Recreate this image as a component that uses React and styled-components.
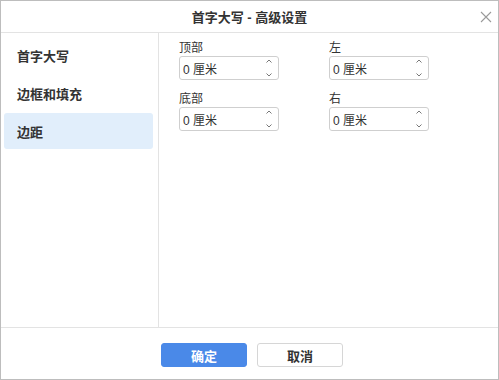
import { createGlobalStyle, styled } from 'styled-components';

const GlobalStyle = createGlobalStyle`
  html, body {
    margin: 0;
    padding: 0;
    background: #fff;
  }
  body {
    font-family: "Liberation Sans", "Noto Sans CJK SC", sans-serif;
    color: #333;
  }
`;

const Dialog = styled.div`
  width: 499px;
  height: 380px;
  box-sizing: border-box;
  border: 1px solid #bdbdbd;
  background: #fff;
  display: flex;
  flex-direction: column;
`;

const Header = styled.div`
  height: 31px;
  flex-shrink: 0;
  border-bottom: 1px solid #e3e3e3;
  display: flex;
  align-items: center;
  justify-content: center;
  position: relative;
`;

const Title = styled.div`
  font-size: 13px;
  font-weight: 700;
  color: #333;
`;

const CloseButton = styled.button`
  position: absolute;
  right: 5px;
  top: 9px;
  width: 14px;
  height: 14px;
  padding: 0;
  border: none;
  background: transparent;
  display: flex;
  align-items: center;
  justify-content: center;
  cursor: pointer;
`;

const Body = styled.div`
  flex: 1;
  display: flex;
  min-height: 0;
`;

const SideMenu = styled.aside`
  width: 149px;
  flex-shrink: 0;
  border-right: 1px solid #e3e3e3;
  padding: 4px 5px 0 3px;
  display: flex;
  flex-direction: column;
  gap: 2px;
`;

const MenuItem = styled.div`
  height: 36px;
  border-radius: 3px;
  padding-left: 13px;
  display: flex;
  align-items: center;
  font-size: 13px;
  font-weight: 700;
  color: #333;
  background: ${({ $active }) => ($active ? '#e1eefb' : 'transparent')};
  cursor: pointer;
`;

const Content = styled.div`
  flex: 1;
  padding: 7px 0 0 20px;
`;

const FieldGrid = styled.div`
  display: grid;
  grid-template-columns: 100px 100px;
  column-gap: 50px;
  row-gap: 11px;
`;

const Field = styled.div`
  display: flex;
  flex-direction: column;
`;

const Label = styled.div`
  font-size: 12px;
  line-height: 16px;
  color: #333;
`;

const SpinBox = styled.div`
  height: 24px;
  box-sizing: border-box;
  border: 1px solid #cfcfcf;
  border-radius: 3px;
  display: flex;
  align-items: center;
  padding: 0 6px 0 3px;
`;

const SpinValue = styled.div`
  flex: 1;
  font-size: 12px;
  color: #333;
`;

const SpinArrows = styled.div`
  display: flex;
  flex-direction: column;
  justify-content: space-between;
  height: 18px;
`;

const Footer = styled.div`
  height: 52px;
  box-sizing: border-box;
  flex-shrink: 0;
  border-top: 1px solid #e3e3e3;
  display: flex;
  justify-content: center;
  align-items: flex-start;
  padding: 15px 0 0 5px;
  gap: 10px;
`;

const Button = styled.button`
  width: 86px;
  height: 24px;
  box-sizing: border-box;
  border-radius: 3px;
  font-family: inherit;
  font-size: 13px;
  font-weight: 700;
  padding: 0;
  cursor: pointer;
  border: 1px solid ${({ $primary }) => ($primary ? '#4a89e8' : '#d6d6d6')};
  background: ${({ $primary }) => ($primary ? '#4a89e8' : '#fff')};
  color: ${({ $primary }) => ($primary ? '#fff' : '#333')};
`;

const menu = ['首字大写', '边框和填充', '边距'];
const fields = ['顶部', '左', '底部', '右'];

function Chevron({ up }) {
  return (
    <svg width="6" height="4" viewBox="0 0 6 4">
      <path
        d={up ? 'M0.5 3.5 L3 1 L5.5 3.5' : 'M0.5 0.5 L3 3 L5.5 0.5'}
        fill="none"
        stroke="#777"
        strokeWidth="1"
      />
    </svg>
  );
}

export default function App() {
  return (
    <>
      <GlobalStyle />
      <Dialog>
        <Header>
          <Title>首字大写 - 高级设置</Title>
          <CloseButton>
            <svg width="12" height="12" viewBox="0 0 12 12">
              <path d="M1 1 L11 11 M11 1 L1 11" stroke="#9a9a9a" strokeWidth="1.1" />
            </svg>
          </CloseButton>
        </Header>
        <Body>
          <SideMenu>
            {menu.map((item, i) => (
              <MenuItem key={item} $active={i === 2}>
                {item}
              </MenuItem>
            ))}
          </SideMenu>
          <Content>
            <FieldGrid>
              {fields.map((f) => (
                <Field key={f}>
                  <Label>{f}</Label>
                  <SpinBox>
                    <SpinValue>0 厘米</SpinValue>
                    <SpinArrows>
                      <Chevron up />
                      <Chevron />
                    </SpinArrows>
                  </SpinBox>
                </Field>
              ))}
            </FieldGrid>
          </Content>
        </Body>
        <Footer>
          <Button $primary>确定</Button>
          <Button>取消</Button>
        </Footer>
      </Dialog>
    </>
  );
}
